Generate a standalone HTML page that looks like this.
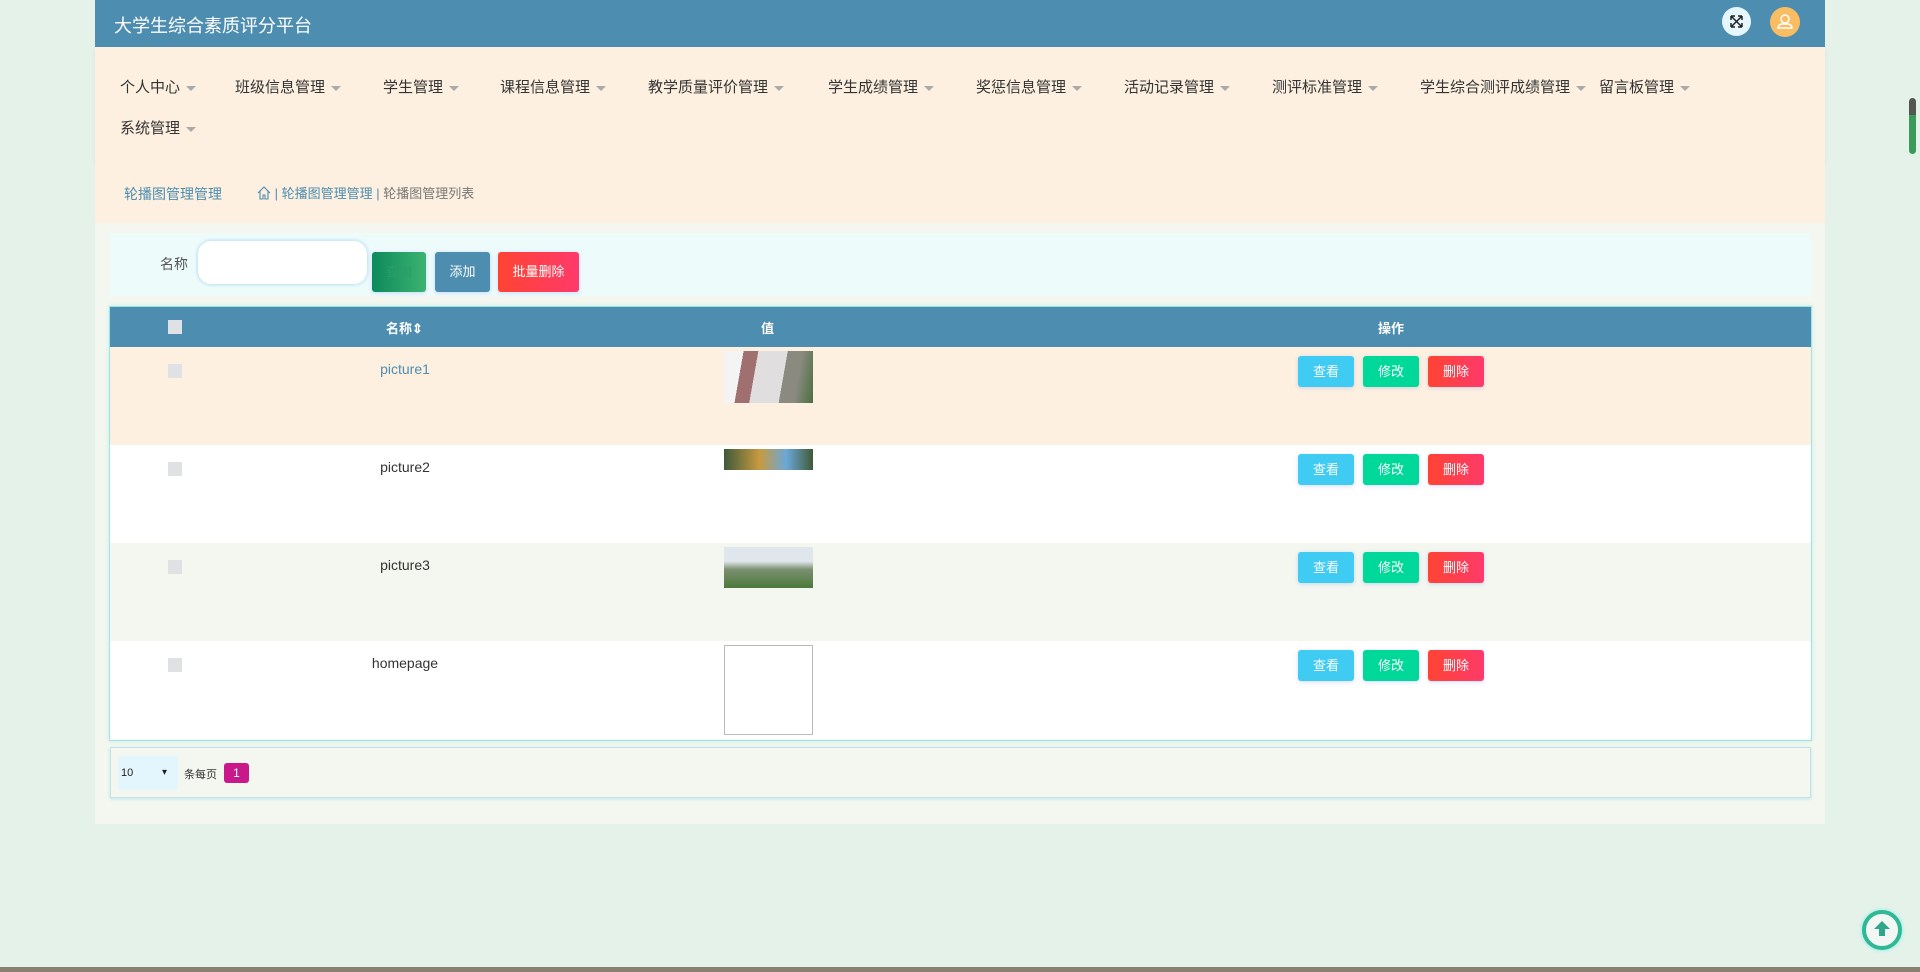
<!DOCTYPE html>
<html><head><meta charset="utf-8"><style>
*{margin:0;padding:0;box-sizing:border-box}
body{width:1920px;height:972px;overflow:hidden;background:#e5f2ea;font-family:"Liberation Sans","Noto Sans CJK SC",sans-serif;position:relative}
.a{position:absolute}
.wrap{left:95px;top:0;width:1730px;height:824px;background:#f3f7ef}
.hdr{left:95px;top:0;width:1730px;height:47px;background:#4d8db0}
.nav{left:95px;top:47px;width:1730px;height:116px;background:#fdf0e0;box-shadow:0 2px 4px rgba(0,0,0,.06)}
.nav span{position:absolute;font-size:15px;color:#333;white-space:nowrap}
.nav span:after{content:"";display:inline-block;margin-left:6px;vertical-align:middle;border-left:5px solid transparent;border-right:5px solid transparent;border-top:5px solid #aaa}
.bc{left:95px;top:163px;width:1730px;height:60px;background:#fdf0e0}
.btn{position:absolute;color:#fff;font-size:13px;text-align:center;border-radius:3px;box-shadow:0 1px 4px rgba(80,120,255,.25)}
.row{position:absolute;left:110px;width:1701px;height:98px}
.cb{position:absolute;left:58px;top:17px;width:14px;height:14px;background:#dfe1e5}
.nm{position:absolute;left:0;width:590px;text-align:center;top:14px;font-size:14px;color:#333}
</style></head><body>
<div class="a wrap"></div>
<div class="a hdr"></div>
<div class="a" style="left:114px;top:12px;color:#fff;font-size:18px">大学生综合素质评分平台</div>
<div class="a" style="left:1722px;top:7px;width:29px;height:29px;border-radius:50%;background:#e6f6fd">
<svg width="29" height="29" viewBox="0 0 29 29" fill="none" stroke="#222" stroke-width="1.5"><path d="M9 9l11 11M20 9L9 20M9 9h4M9 9v4M20 9h-4M20 9v4M9 20h4M9 20v-4M20 20h-4M20 20v-4"/></svg></div>
<div class="a" style="left:1770px;top:7px;width:30px;height:30px;border-radius:50%;background:#fbbd62">
<svg width="30" height="30" viewBox="0 0 30 30" fill="none" stroke="#fff" stroke-width="1.5"><circle cx="15" cy="12" r="4"/><path d="M8 21c0-3 3-4 4-4h6c1 0 4 1 4 4z"/></svg></div>
<div class="a nav">
<span style="left:25px;top:29px">个人中心</span><span style="left:140px;top:29px">班级信息管理</span><span style="left:288px;top:29px">学生管理</span><span style="left:405px;top:29px">课程信息管理</span><span style="left:553px;top:29px">教学质量评价管理</span><span style="left:733px;top:29px">学生成绩管理</span><span style="left:881px;top:29px">奖惩信息管理</span><span style="left:1029px;top:29px">活动记录管理</span><span style="left:1177px;top:29px">测评标准管理</span><span style="left:1325px;top:29px">学生综合测评成绩管理</span><span style="left:1504px;top:29px">留言板管理</span>
<span style="left:25px;top:70px">系统管理</span></div>
<div class="a bc"></div>
<div class="a" style="left:124px;top:184px;font-size:14px;color:#4d8db0">轮播图管理管理</div>
<div class="a" style="left:257px;top:183px;font-size:13px;color:#4d8db0"><svg width="14" height="14" viewBox="0 0 14 14" fill="none" stroke="#4d8db0" stroke-width="1.1" style="vertical-align:-2px"><path d="M1 7L7 1l6 6M3 5v8h3V9h2v4h3V5"/></svg> | 轮播图管理管理 | <span style="color:#777">轮播图管理列表</span></div>
<div class="a" style="left:110px;top:233px;width:1701px;height:63px;background:#eefbfb"></div>
<div class="a" style="left:160px;top:254px;font-size:14px;color:#555">名称</div>
<div class="a" style="left:198px;top:241px;width:169px;height:43px;background:#fff;border-radius:13px;box-shadow:0 0 4px #9cd0f0"></div>
<div class="btn" style="left:372px;top:252px;width:54px;height:40px;line-height:40px;background:linear-gradient(90deg,#0d8a5c,#3cb371);color:#2a9c6a">查询</div>
<div class="btn" style="left:435px;top:252px;width:55px;height:40px;line-height:40px;background:#4d8db0">添加</div>
<div class="btn" style="left:498px;top:252px;width:81px;height:40px;line-height:40px;background:linear-gradient(90deg,#ff4433,#ff3a6a)">批量删除</div>
<div class="a" style="left:109px;top:306px;width:1703px;height:435px;border:1px solid #9fe3e3;box-shadow:0 0 4px #bfeeee"></div>
<div class="a" style="left:110px;top:307px;width:1701px;height:40px;background:#4d8db0;color:#fff;font-size:13px;font-weight:bold">
<div class="a" style="left:58px;top:13px;width:14px;height:14px;background:#dfe1e5"></div>
<div class="a" style="left:276px;top:11px;width:60px">名称⇕</div>
<div class="a" style="left:651px;top:11px">值</div>
<div class="a" style="left:1268px;top:11px">操作</div></div>
<div class="row" style="top:347px;background:#fdf0e0"><div class="cb"></div><div class="nm" style="color:#4d8db0">picture1</div>
<div class="a" style="left:614px;top:4px;width:89px;height:52px;background:linear-gradient(100deg,#f4f4f4 0 20%,#a07070 20% 35%,#e0dede 35% 65%,#8a8a80 65% 80%,#4c7040)"></div></div>
<div class="row" style="top:445px;background:#fff"><div class="cb"></div><div class="nm">picture2</div>
<div class="a" style="left:614px;top:4px;width:89px;height:21px;background:linear-gradient(90deg,#3e5a3a,#c89a40 40%,#6aa8d8 70%,#405a38)"></div></div>
<div class="row" style="top:543px;background:#f3f7ef"><div class="cb"></div><div class="nm">picture3</div>
<div class="a" style="left:614px;top:4px;width:89px;height:41px;background:linear-gradient(180deg,#dfe6ec 0 35%,#7a8f70 55%,#4c7a3a)"></div></div>
<div class="row" style="top:641px;background:#fff"><div class="cb"></div><div class="nm">homepage</div>
<div class="a" style="left:614px;top:4px;width:89px;height:90px;border:1px solid #bbb"></div></div>
<div class="a" style="left:110px;top:347px">
<div class="btn" style="left:1188px;top:9px;width:56px;height:31px;line-height:31px;background:#3fcbf2">查看</div><div class="btn" style="left:1253px;top:9px;width:56px;height:31px;line-height:31px;background:#00d89a">修改</div><div class="btn" style="left:1318px;top:9px;width:56px;height:31px;line-height:31px;background:linear-gradient(90deg,#ff4433,#ff3a6a)">删除</div>
<div class="btn" style="left:1188px;top:107px;width:56px;height:31px;line-height:31px;background:#3fcbf2">查看</div><div class="btn" style="left:1253px;top:107px;width:56px;height:31px;line-height:31px;background:#00d89a">修改</div><div class="btn" style="left:1318px;top:107px;width:56px;height:31px;line-height:31px;background:linear-gradient(90deg,#ff4433,#ff3a6a)">删除</div>
<div class="btn" style="left:1188px;top:205px;width:56px;height:31px;line-height:31px;background:#3fcbf2">查看</div><div class="btn" style="left:1253px;top:205px;width:56px;height:31px;line-height:31px;background:#00d89a">修改</div><div class="btn" style="left:1318px;top:205px;width:56px;height:31px;line-height:31px;background:linear-gradient(90deg,#ff4433,#ff3a6a)">删除</div>
<div class="btn" style="left:1188px;top:303px;width:56px;height:31px;line-height:31px;background:#3fcbf2">查看</div><div class="btn" style="left:1253px;top:303px;width:56px;height:31px;line-height:31px;background:#00d89a">修改</div><div class="btn" style="left:1318px;top:303px;width:56px;height:31px;line-height:31px;background:linear-gradient(90deg,#ff4433,#ff3a6a)">删除</div>
</div>
<div class="a" style="left:110px;top:747px;width:1701px;height:51px;background:#f3f7ef;border:1px solid #bfe3ea;box-shadow:0 1px 3px #bfe3ea"></div>
<div class="a" style="left:118px;top:756px;width:60px;height:34px;background:#e3f6fd;border-radius:3px;font-size:11px;line-height:34px;padding-left:3px;color:#222">10<span style="position:absolute;left:44px;font-size:10px">▾</span></div>
<div class="a" style="left:184px;top:766px;font-size:11px;color:#333">条每页</div>
<div class="a" style="left:224px;top:763px;width:25px;height:20px;background:#c8188a;border-radius:3px;color:#fff;font-size:12px;text-align:center;line-height:20px">1</div>
<div class="a" style="left:1909px;top:98px;width:7px;height:56px;border-radius:4px;background:linear-gradient(#555 0 30%,#3a9a5a 30%)"></div>
<div class="a" style="left:1862px;top:910px;width:40px;height:40px;border-radius:50%;border:4px solid #2fb894;background:#f2f7f4;box-shadow:0 0 5px #8ee">
<svg width="32" height="32" viewBox="0 0 32 32"><path d="M16 7l8 8h-5v7h-6v-7H8z" fill="#2fa68a"/></svg></div>
<div class="a" style="left:0;top:967px;width:1920px;height:5px;background:#8a8070"></div>
</body></html>
